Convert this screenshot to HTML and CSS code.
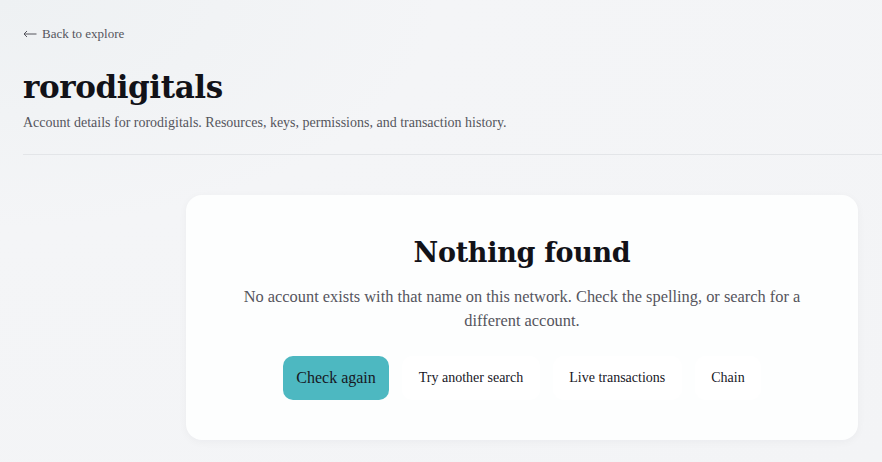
FILE: index.html
```html
<!DOCTYPE html>
<html>
<head>
<meta charset="utf-8">
<link rel="stylesheet" href="styles.css">
</head>
<body>
<div class="page">
  <a class="back" href="#"><svg class="arrow" width="14" height="8" viewBox="0 0 14 8"><path d="M13.5 4H1M4 1L1 4l3 3" fill="none" stroke="#55555d" stroke-width="1"/></svg>Back to explore</a>
  <h1 class="title">rorodigitals</h1>
  <p class="subtitle">Account details for rorodigitals. Resources, keys, permissions, and transaction history.</p>
  <hr class="divider">
  <div class="main">
    <div class="spacer"></div>
    <section class="card">
      <h2 class="card-title">Nothing found</h2>
      <p class="card-text">No account exists with that name on this network. Check the spelling, or search for a different account.</p>
      <div class="actions">
        <button class="btn primary">Check again</button>
        <button class="btn">Try another search</button>
        <button class="btn">Live transactions</button>
        <button class="btn">Chain</button>
      </div>
    </section>
  </div>
</div>
</body>
</html>
```
FILE: styles.css
```css
html, body {
  margin: 0;
  padding: 0;
}
body {
  font-family: "Liberation Serif", "Times New Roman", serif;
  background: radial-gradient(ellipse at 0 0, #eef1f3 0%, #f4f5f7 35%, #f3f4f6 100%);
  width: 882px;
  height: 462px;
  overflow: hidden;
  color: #14141c;
}
.page {
  padding: 24px 0 0 23px;
}
.back {
  display: inline-flex;
  align-items: center;
  gap: 5px;
  font-size: 13px;
  color: #55555d;
  text-decoration: none;
  line-height: 18px;
}
.arrow {
  display: block;
  margin-top: 1px;
}
.title {
  margin: 21px 0 0;
  font-family: "DejaVu Serif", Georgia, serif;
  font-size: 31px;
  line-height: 46px;
  font-weight: bold;
  letter-spacing: -0.4px;
  color: #121218;
}
.subtitle {
  margin: 4px 0 0;
  font-size: 14px;
  line-height: 18px;
  color: #55555d;
}
.divider {
  margin: 22px 0 0;
  border: 0;
  border-top: 1px solid #e3e5e8;
  width: 900px;
}
.main {
  display: flex;
  margin-top: 40px;
}
.spacer {
  width: 163px;
  flex: none;
}
.card {
  width: 672px;
  height: 245px;
  box-sizing: border-box;
  background: #fdfefe;
  border-radius: 16px;
  box-shadow: 0 2px 8px rgba(20, 30, 50, 0.04);
  padding: 38px 40px 0;
  text-align: center;
}
.card-title {
  margin: 0;
  font-family: "DejaVu Serif", Georgia, serif;
  font-size: 27px;
  line-height: 40px;
  font-weight: bold;
  letter-spacing: -0.3px;
  color: #121218;
}
.card-text {
  margin: 12px auto 0;
  max-width: 570px;
  font-size: 16.4px;
  line-height: 24px;
  color: #55555d;
}
.actions {
  display: flex;
  justify-content: center;
  gap: 13px;
  margin-top: 23px;
}
.btn {
  font-family: "Liberation Serif", "Times New Roman", serif;
  font-size: 14px;
  height: 44px;
  padding: 0 16.5px;
  border: 0;
  border-radius: 10px;
  background: #ffffff;
  color: #17171f;
  cursor: pointer;
}
.btn.primary {
  font-size: 16px;
  padding: 0 13.5px;
  background: #4db8c1;
}
```
